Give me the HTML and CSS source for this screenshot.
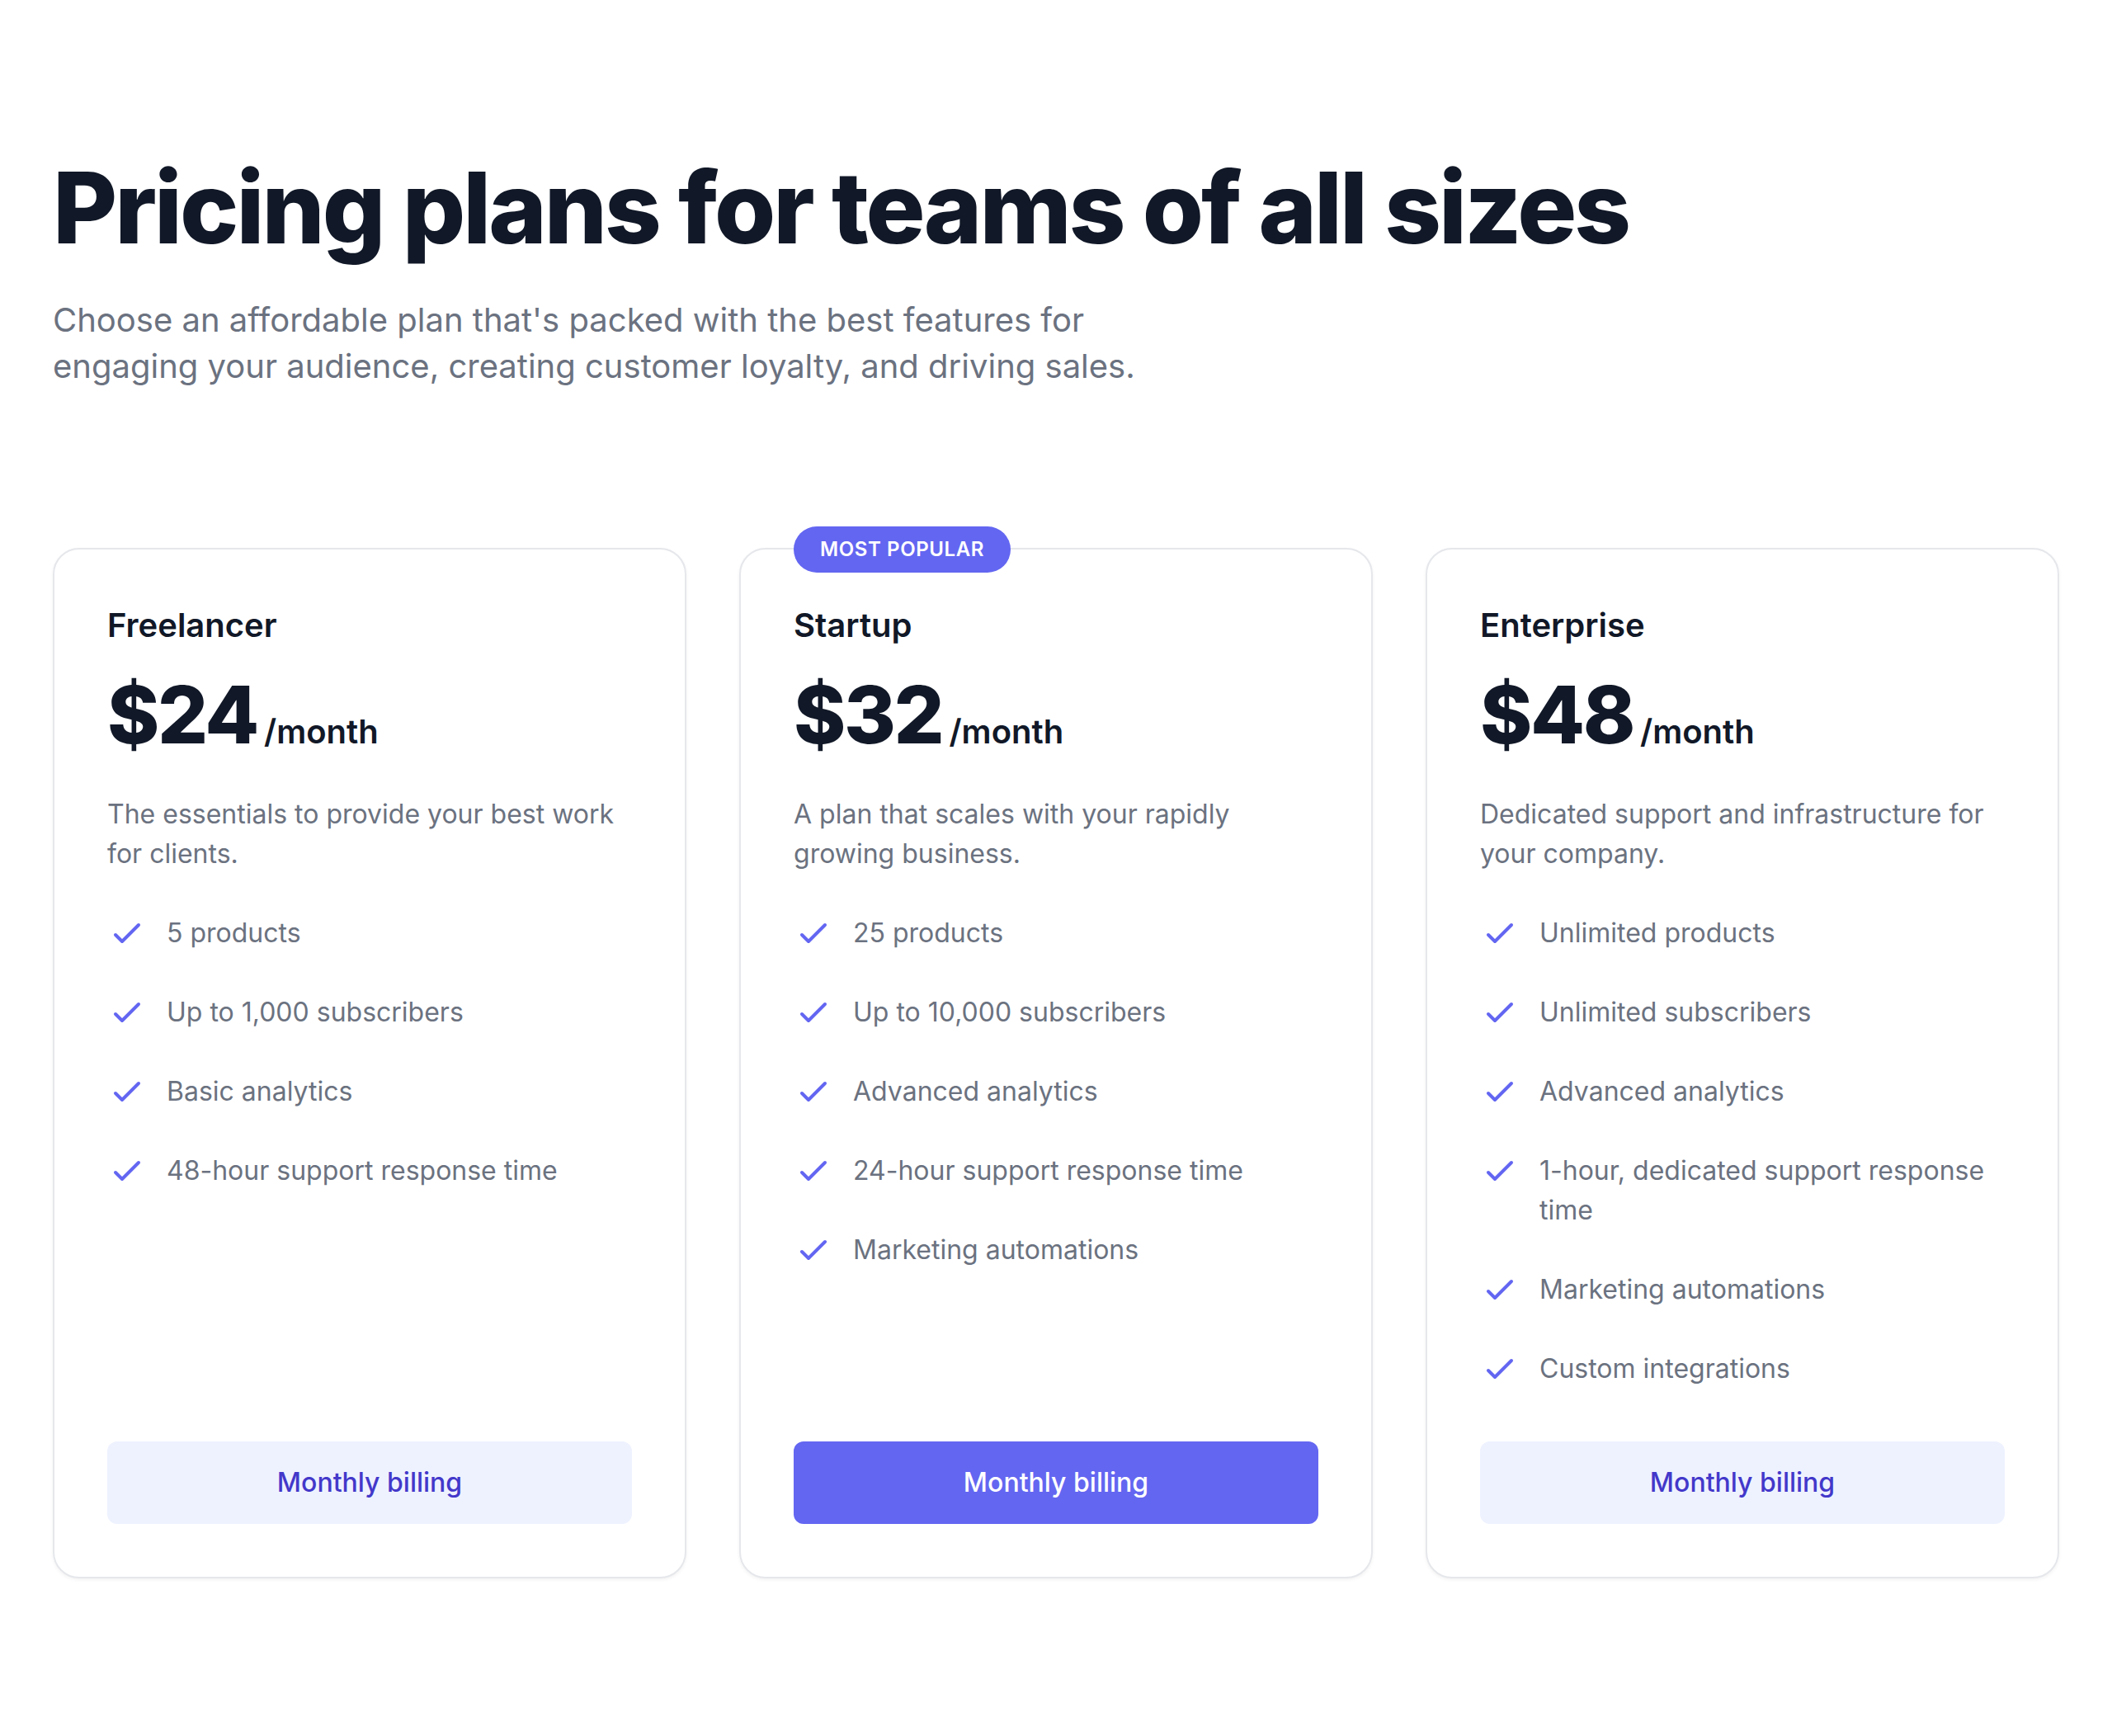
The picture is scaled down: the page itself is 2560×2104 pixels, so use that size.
FILE: index.html
```html
<!DOCTYPE html>
<html lang="en">
<head>
<meta charset="utf-8">
<title>Pricing</title>
<link rel="stylesheet" href="styles.css">
</head>
<body>
<main class="page">
  <h1 class="heading">Pricing plans for teams of all sizes</h1>
  <p class="lead">Choose an affordable plan that's packed with the best features for engaging your audience, creating customer loyalty, and driving sales.</p>

  <div class="plans">
    <div class="card">
      <div class="card-body">
        <h3 class="title">Freelancer</h3>
        <p class="price"><span class="amount">$24</span><span class="per">/month</span></p>
        <p class="desc">The essentials to provide your best work for clients.</p>
        <ul class="features">
          <li><svg class="check" viewBox="0 0 24 24" fill="none" stroke="currentColor"><path stroke-linecap="round" stroke-linejoin="round" stroke-width="2" d="M5 13l4 4L19 7"/></svg><span>5 products</span></li>
          <li><svg class="check" viewBox="0 0 24 24" fill="none" stroke="currentColor"><path stroke-linecap="round" stroke-linejoin="round" stroke-width="2" d="M5 13l4 4L19 7"/></svg><span>Up to 1,000 subscribers</span></li>
          <li><svg class="check" viewBox="0 0 24 24" fill="none" stroke="currentColor"><path stroke-linecap="round" stroke-linejoin="round" stroke-width="2" d="M5 13l4 4L19 7"/></svg><span>Basic analytics</span></li>
          <li><svg class="check" viewBox="0 0 24 24" fill="none" stroke="currentColor"><path stroke-linecap="round" stroke-linejoin="round" stroke-width="2" d="M5 13l4 4L19 7"/></svg><span>48-hour support response time</span></li>
        </ul>
      </div>
      <a href="#" class="btn btn-light">Monthly billing</a>
    </div>

    <div class="card">
      <div class="card-body">
        <h3 class="title">Startup</h3>
        <p class="badge">Most popular</p>
        <p class="price"><span class="amount">$32</span><span class="per">/month</span></p>
        <p class="desc">A plan that scales with your rapidly growing business.</p>
        <ul class="features">
          <li><svg class="check" viewBox="0 0 24 24" fill="none" stroke="currentColor"><path stroke-linecap="round" stroke-linejoin="round" stroke-width="2" d="M5 13l4 4L19 7"/></svg><span>25 products</span></li>
          <li><svg class="check" viewBox="0 0 24 24" fill="none" stroke="currentColor"><path stroke-linecap="round" stroke-linejoin="round" stroke-width="2" d="M5 13l4 4L19 7"/></svg><span>Up to 10,000 subscribers</span></li>
          <li><svg class="check" viewBox="0 0 24 24" fill="none" stroke="currentColor"><path stroke-linecap="round" stroke-linejoin="round" stroke-width="2" d="M5 13l4 4L19 7"/></svg><span>Advanced analytics</span></li>
          <li><svg class="check" viewBox="0 0 24 24" fill="none" stroke="currentColor"><path stroke-linecap="round" stroke-linejoin="round" stroke-width="2" d="M5 13l4 4L19 7"/></svg><span>24-hour support response time</span></li>
          <li><svg class="check" viewBox="0 0 24 24" fill="none" stroke="currentColor"><path stroke-linecap="round" stroke-linejoin="round" stroke-width="2" d="M5 13l4 4L19 7"/></svg><span>Marketing automations</span></li>
        </ul>
      </div>
      <a href="#" class="btn btn-primary">Monthly billing</a>
    </div>

    <div class="card">
      <div class="card-body">
        <h3 class="title">Enterprise</h3>
        <p class="price"><span class="amount">$48</span><span class="per">/month</span></p>
        <p class="desc">Dedicated support and infrastructure for your company.</p>
        <ul class="features">
          <li><svg class="check" viewBox="0 0 24 24" fill="none" stroke="currentColor"><path stroke-linecap="round" stroke-linejoin="round" stroke-width="2" d="M5 13l4 4L19 7"/></svg><span>Unlimited products</span></li>
          <li><svg class="check" viewBox="0 0 24 24" fill="none" stroke="currentColor"><path stroke-linecap="round" stroke-linejoin="round" stroke-width="2" d="M5 13l4 4L19 7"/></svg><span>Unlimited subscribers</span></li>
          <li><svg class="check" viewBox="0 0 24 24" fill="none" stroke="currentColor"><path stroke-linecap="round" stroke-linejoin="round" stroke-width="2" d="M5 13l4 4L19 7"/></svg><span>Advanced analytics</span></li>
          <li><svg class="check" viewBox="0 0 24 24" fill="none" stroke="currentColor"><path stroke-linecap="round" stroke-linejoin="round" stroke-width="2" d="M5 13l4 4L19 7"/></svg><span>1-hour, dedicated support response time</span></li>
          <li><svg class="check" viewBox="0 0 24 24" fill="none" stroke="currentColor"><path stroke-linecap="round" stroke-linejoin="round" stroke-width="2" d="M5 13l4 4L19 7"/></svg><span>Marketing automations</span></li>
          <li><svg class="check" viewBox="0 0 24 24" fill="none" stroke="currentColor"><path stroke-linecap="round" stroke-linejoin="round" stroke-width="2" d="M5 13l4 4L19 7"/></svg><span>Custom integrations</span></li>
        </ul>
      </div>
      <a href="#" class="btn btn-light">Monthly billing</a>
    </div>
  </div>
</main>
</body>
</html>
```

FILE: styles.css
```css
* { box-sizing: border-box; }

html, body {
  margin: 0;
  padding: 0;
  background: #ffffff;
}

body {
  font-family: Inter, "Noto Sans", "Liberation Sans", sans-serif;
  color: #111827;
  -webkit-font-smoothing: antialiased;
}

.page {
  padding: 192px 64px;
}

.heading {
  margin: 0;
  font-size: 120px;
  line-height: 1;
  font-weight: 800;
  letter-spacing: -0.025em;
  color: #111827;
}

.lead {
  margin: 48px 0 0;
  max-width: 1344px;
  font-size: 40px;
  line-height: 56px;
  color: #6b7280;
}

.plans {
  margin-top: 192px;
  display: grid;
  grid-template-columns: repeat(3, 1fr);
  gap: 64px;
}

.card {
  position: relative;
  display: flex;
  flex-direction: column;
  padding: 64px;
  background: #ffffff;
  border: 2px solid #e5e7eb;
  border-radius: 32px;
  box-shadow: 0 2px 4px 0 rgba(0, 0, 0, 0.05);
}

.card-body {
  flex: 1;
}

.title {
  margin: 0;
  font-size: 40px;
  line-height: 56px;
  font-weight: 600;
  color: #111827;
}

.badge {
  position: absolute;
  top: 0;
  margin: 0;
  transform: translateY(-50%);
  padding: 12px 32px;
  border-radius: 9999px;
  background: #6366f1;
  color: #ffffff;
  font-size: 24px;
  line-height: 32px;
  font-weight: 600;
  text-transform: uppercase;
  letter-spacing: 0.025em;
}

.price {
  margin: 32px 0 0;
  display: flex;
  align-items: baseline;
  color: #111827;
}

.amount {
  font-size: 96px;
  line-height: 1;
  font-weight: 800;
  letter-spacing: -0.025em;
}

.per {
  margin-left: 8px;
  font-size: 40px;
  line-height: 56px;
  font-weight: 600;
}

.desc {
  margin: 48px 0 0;
  font-size: 32px;
  line-height: 48px;
  color: #6b7280;
}

.features {
  margin: 48px 0 0;
  padding: 0;
  list-style: none;
  display: flex;
  flex-direction: column;
  gap: 48px;
}

.features li {
  display: flex;
  font-size: 32px;
  line-height: 48px;
  color: #6b7280;
}

.check {
  flex-shrink: 0;
  width: 48px;
  height: 48px;
  color: #6366f1;
}

.features span {
  margin-left: 24px;
}

.btn {
  display: block;
  margin-top: 64px;
  width: 100%;
  padding: 24px 48px;
  border: 2px solid transparent;
  border-radius: 12px;
  text-align: center;
  text-decoration: none;
  font-size: 32px;
  line-height: 48px;
  font-weight: 500;
}

.btn-light {
  background: #eef2ff;
  color: #4338ca;
}

.btn-primary {
  background: #6366f1;
  color: #ffffff;
}
```
